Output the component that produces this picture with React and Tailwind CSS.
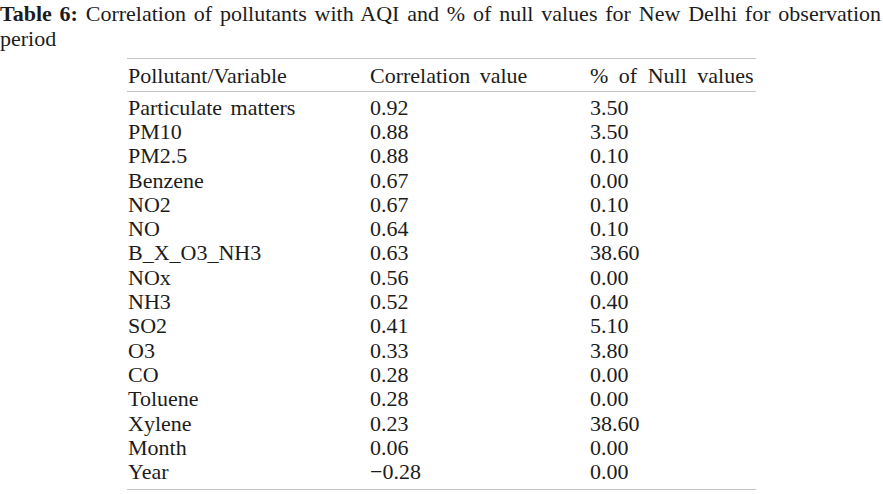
const rows = [
  ['Particulate matters', '0.92', '3.50'],
  ['PM10', '0.88', '3.50'],
  ['PM2.5', '0.88', '0.10'],
  ['Benzene', '0.67', '0.00'],
  ['NO2', '0.67', '0.10'],
  ['NO', '0.64', '0.10'],
  ['B_X_O3_NH3', '0.63', '38.60'],
  ['NOx', '0.56', '0.00'],
  ['NH3', '0.52', '0.40'],
  ['SO2', '0.41', '5.10'],
  ['O3', '0.33', '3.80'],
  ['CO', '0.28', '0.00'],
  ['Toluene', '0.28', '0.00'],
  ['Xylene', '0.23', '38.60'],
  ['Month', '0.06', '0.00'],
  ['Year', '\u22120.28', '0.00'],
];

export default function App() {
  return (
    <div className="w-[883px] h-[494px] overflow-hidden bg-white text-[#1c1c1c] font-['Liberation_Serif','Times_New_Roman',serif] text-[22px]">
      {/* caption */}
      <p className="w-[881px] leading-[25px] text-justify pt-px">
        <span className="font-bold">Table 6:</span> Correlation of pollutants with AQI and % of null values for New Delhi for observation period
      </p>

      {/* table */}
      <div className="ml-[127px] mt-[7px] w-[629px] border-t border-b border-[#c4c4c4]">
        <div className="flex items-center h-[33px] border-b border-[#c4c4c4]">
          <div className="w-[243px] pl-px">Pollutant/Variable</div>
          <div className="w-[220px] [word-spacing:4px]">Correlation value</div>
          <div className="flex-1 [word-spacing:5px]">% of Null values</div>
        </div>
        <div className="pt-[3px] pb-[5px]">
          {rows.map(([name, corr, nul]) => (
            <div key={name} className="flex items-center h-[24.3px]">
              <div className="w-[243px] pl-px [word-spacing:3px]">{name}</div>
              <div className="w-[220px]">{corr}</div>
              <div className="flex-1">{nul}</div>
            </div>
          ))}
        </div>
      </div>
    </div>
  );
}
